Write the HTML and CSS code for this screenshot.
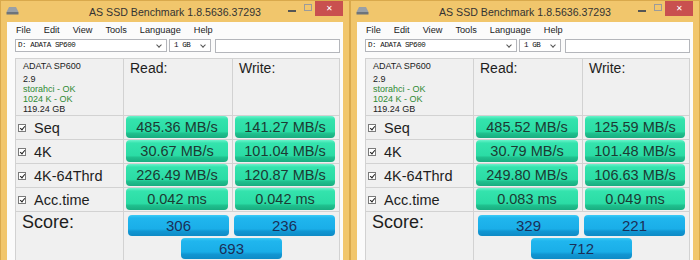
FILE: index.html
```html
<!DOCTYPE html>
<html>
<head>
    <meta name="viewport" content="width=device-width, initial-scale=1.0">
    <link rel="stylesheet" href="styles.css">
</head>
<body>
    <div class="desk">
        <!-- first run -->
        <div class="win">
            <div class="titlebar">
                <svg class="app-icon" width="13" height="9" viewBox="0 0 13 9">
                    <path d="M3 1 h7 l2.5 5 h-12 z" fill="#9aa0a6"/>
                    <rect x="0.5" y="6" width="12" height="2.5" fill="#6d737a"/>
                </svg>
                <div class="title">AS SSD Benchmark 1.8.5636.37293</div>
                <div class="controls">
                    <span class="min"></span>
                    <span class="max"></span>
                    <span class="close">&#x2715;</span>
                </div>
            </div>
            <div class="client">
                <div class="menubar">
                    <span>File</span><span>Edit</span><span>View</span><span>Tools</span><span>Language</span><span>Help</span>
                </div>
                <div class="toolbar">
                    <div class="combo drive">D: ADATA SP600<span class="arrow"></span></div>
                    <div class="combo size">1 GB<span class="arrow"></span></div>
                    <div class="textbox"></div>
                </div>
                <div class="results">
                    <div class="info">
                        <div class="first">ADATA SP600</div>
                        <div>2.9</div>
                        <div class="ok">storahci - OK</div>
                        <div class="ok">1024 K - OK</div>
                        <div>119.24 GB</div>
                    </div>
                    <div class="head">Read:</div>
                    <div class="head">Write:</div>

                    <div class="label"><span class="check"></span>Seq</div>
                    <div class="cell"><div class="val">485.36 MB/s</div></div>
                    <div class="cell"><div class="val">141.27 MB/s</div></div>

                    <div class="label"><span class="check"></span>4K</div>
                    <div class="cell"><div class="val">30.67 MB/s</div></div>
                    <div class="cell"><div class="val">101.04 MB/s</div></div>

                    <div class="label"><span class="check"></span>4K-64Thrd</div>
                    <div class="cell"><div class="val">226.49 MB/s</div></div>
                    <div class="cell"><div class="val">120.87 MB/s</div></div>

                    <div class="label"><span class="check"></span>Acc.time</div>
                    <div class="cell"><div class="val">0.042 ms</div></div>
                    <div class="cell"><div class="val">0.042 ms</div></div>

                    <div class="score-label">Score:</div>
                    <div class="scores">
                        <div class="score">306</div>
                        <div class="score">236</div>
                        <div class="score total">693</div>
                    </div>
                </div>
            </div>
        </div>

        <!-- second run -->
        <div class="win">
            <div class="titlebar">
                <svg class="app-icon" width="13" height="9" viewBox="0 0 13 9">
                    <path d="M3 1 h7 l2.5 5 h-12 z" fill="#9aa0a6"/>
                    <rect x="0.5" y="6" width="12" height="2.5" fill="#6d737a"/>
                </svg>
                <div class="title">AS SSD Benchmark 1.8.5636.37293</div>
                <div class="controls">
                    <span class="min"></span>
                    <span class="max"></span>
                    <span class="close">&#x2715;</span>
                </div>
            </div>
            <div class="client">
                <div class="menubar">
                    <span>File</span><span>Edit</span><span>View</span><span>Tools</span><span>Language</span><span>Help</span>
                </div>
                <div class="toolbar">
                    <div class="combo drive">D: ADATA SP600<span class="arrow"></span></div>
                    <div class="combo size">1 GB<span class="arrow"></span></div>
                    <div class="textbox"></div>
                </div>
                <div class="results">
                    <div class="info">
                        <div class="first">ADATA SP600</div>
                        <div>2.9</div>
                        <div class="ok">storahci - OK</div>
                        <div class="ok">1024 K - OK</div>
                        <div>119.24 GB</div>
                    </div>
                    <div class="head">Read:</div>
                    <div class="head">Write:</div>

                    <div class="label"><span class="check"></span>Seq</div>
                    <div class="cell"><div class="val">485.52 MB/s</div></div>
                    <div class="cell"><div class="val">125.59 MB/s</div></div>

                    <div class="label"><span class="check"></span>4K</div>
                    <div class="cell"><div class="val">30.79 MB/s</div></div>
                    <div class="cell"><div class="val">101.48 MB/s</div></div>

                    <div class="label"><span class="check"></span>4K-64Thrd</div>
                    <div class="cell"><div class="val">249.80 MB/s</div></div>
                    <div class="cell"><div class="val">106.63 MB/s</div></div>

                    <div class="label"><span class="check"></span>Acc.time</div>
                    <div class="cell"><div class="val">0.083 ms</div></div>
                    <div class="cell"><div class="val">0.049 ms</div></div>

                    <div class="score-label">Score:</div>
                    <div class="scores">
                        <div class="score">329</div>
                        <div class="score">221</div>
                        <div class="score total">712</div>
                    </div>
                </div>
            </div>
        </div>
    </div>
</body>
</html>
```

FILE: styles.css
```css
* {
    margin: 0;
    padding: 0;
    box-sizing: border-box;
}

body {
    width: 700px;
    height: 260px;
    overflow: hidden;
    background: #f0c468;
    font-family: "Liberation Sans", Arial, sans-serif;
    color: #1e1e1e;
}

.desk {
    display: flex;
}

.win {
    width: 350px;
    height: 300px;
    background: #f1c66c;
    border: 1px solid #d9a94c;
    padding: 0 6px;
}

/* title bar */

.titlebar {
    height: 21px;
    display: grid;
    grid-template-columns: 1fr auto 1fr;
    align-items: center;
}

.app-icon {
    margin-left: -1px;
    margin-top: -2px;
}

.title {
    font-size: 10.6px;
    color: #333;
    padding-top: 1px;
}

.controls {
    justify-self: end;
    align-self: start;
    display: flex;
    align-items: center;
    height: 15px;
}

.min {
    width: 8px;
    height: 2px;
    background: #555;
    margin-top: 4px;
    margin-right: 8px;
}

.max {
    width: 8px;
    height: 7px;
    border: 1px solid #9b9b9b;
    margin-top: -2px;
    margin-right: 3px;
}

.close {
    width: 28px;
    height: 15px;
    background: #c9504f;
    color: #fff;
    font-size: 8px;
    line-height: 15px;
    text-align: center;
}

/* client area */

.client {
    background: #fbfbfb;
    height: 279px;
    padding: 0 3px 0 8px;
}

.menubar {
    display: flex;
    gap: 13px;
    height: 16px;
    line-height: 16px;
    font-size: 9.2px;
    padding-left: 1px;
    color: #222;
}

.toolbar {
    display: flex;
    height: 13px;
    margin-top: 1px;
}

.combo {
    position: relative;
    height: 13px;
    border: 1px solid #b4b6bb;
    background: #fff;
    font-family: "Liberation Mono", "Courier New", monospace;
    font-size: 7.5px;
    letter-spacing: -0.4px;
    line-height: 11px;
    padding-left: 2px;
    color: #111;
}

.drive {
    width: 152px;
}

.size {
    width: 42px;
    margin-left: 2px;
    padding-left: 4px;
}

.arrow {
    position: absolute;
    right: 5px;
    top: 3px;
    width: 4px;
    height: 4px;
    border-right: 1px solid #555;
    border-bottom: 1px solid #555;
    transform: rotate(45deg);
}

.textbox {
    width: 125px;
    height: 14px;
    margin-left: 4px;
    border: 1px solid #b4b6bb;
    background: #fff;
}

/* result grid */

.results {
    margin-top: 6px;
    width: 325px;
    display: grid;
    grid-template-columns: 107px 108px 106px;
    grid-template-rows: 56px repeat(4, 23px) 60px;
    gap: 1px;
    background: #d2d2d2;
    border: 1px solid #d2d2d2;
}

.results > div {
    background: #f0f0f0;
}

.info {
    padding: 2px 0 0 7px;
    font-size: 9px;
    line-height: 10px;
    color: #222;
}

.info .first {
    margin-bottom: 3px;
}

.info .ok {
    color: #2f8a34;
}

.head {
    font-size: 14px;
    line-height: 16px;
    padding: 1px 0 0 6px;
}

.label {
    display: flex;
    align-items: center;
    font-size: 14.5px;
    padding-left: 2px;
}

.check {
    position: relative;
    width: 8px;
    height: 8px;
    border: 1px solid #7a7a7a;
    background: #fff;
    margin-right: 8px;
}

.check::after {
    content: "";
    position: absolute;
    left: 1.5px;
    top: 0;
    width: 2px;
    height: 4px;
    border-right: 1.3px solid #222;
    border-bottom: 1.3px solid #222;
    transform: rotate(40deg);
}

.cell {
    padding: 0 4px 1px 2px;
}

.val {
    height: 22px;
    line-height: 22px;
    border-radius: 4px;
    text-align: center;
    font-size: 14.5px;
    color: #1c3a33;
    background: linear-gradient(#6af3cb 0%, #34e3ad 14%, #2bdca5 70%, #1fbf8d 80%, #19ad80 100%);
}

.score-label {
    font-size: 18px;
    line-height: 21px;
    padding-left: 6px;
}

.scores {
    grid-column: 2 / 4;
    display: grid;
    grid-template-columns: 101px 101px;
    gap: 2px 5px;
    padding: 3px 0 0 4px;
    align-content: start;
}

.score {
    height: 21px;
    line-height: 21px;
    border-radius: 4px;
    text-align: center;
    font-size: 15px;
    color: #1b2f58;
    background: linear-gradient(#3ccbf6 0%, #20b6ee 14%, #1aaee8 66%, #1196d2 78%, #0e8bc6 100%);
}

.score.total {
    grid-column: 1 / 3;
    justify-self: center;
    width: 101px;
}
```
